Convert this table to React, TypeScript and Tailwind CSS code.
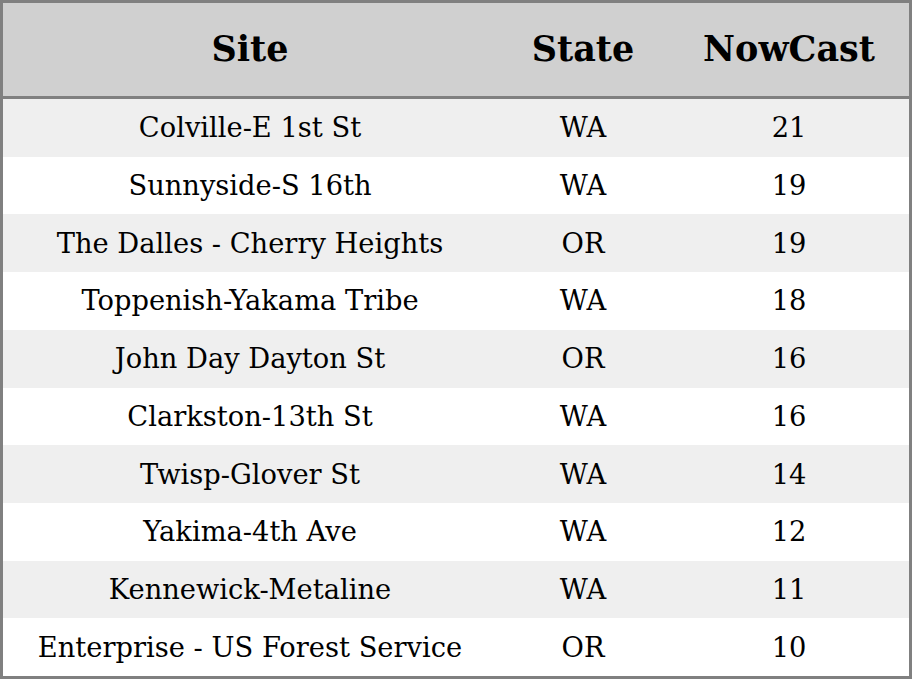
import React from 'react';

const rows = [
  { site: 'Colville-E 1st St', state: 'WA', nowcast: 21 },
  { site: 'Sunnyside-S 16th', state: 'WA', nowcast: 19 },
  { site: 'The Dalles - Cherry Heights', state: 'OR', nowcast: 19 },
  { site: 'Toppenish-Yakama Tribe', state: 'WA', nowcast: 18 },
  { site: 'John Day Dayton St', state: 'OR', nowcast: 16 },
  { site: 'Clarkston-13th St', state: 'WA', nowcast: 16 },
  { site: 'Twisp-Glover St', state: 'WA', nowcast: 14 },
  { site: 'Yakima-4th Ave', state: 'WA', nowcast: 12 },
  { site: 'Kennewick-Metaline', state: 'WA', nowcast: 11 },
  { site: 'Enterprise - US Forest Service', state: 'OR', nowcast: 10 },
];

const App = () => {
  return (
    <div className="h-[679px] w-[912px] border-[3px] border-[#808080] bg-white flex flex-col text-black font-['DejaVu_Serif',serif]">
      {/* Header */}
      <div className="h-[96px] shrink-0 grid grid-cols-[494px_172px_1fr] items-center bg-[#d0d0d0] border-b-[3px] border-[#808080] text-[35px] font-bold">
        <div className="text-center">Site</div>
        <div className="text-center">State</div>
        <div className="text-center">NowCast</div>
      </div>

      {/* Rows */}
      <div className="flex-1 flex flex-col">
        {rows.map((r, i) => (
          <div
            key={i}
            className={`flex-1 grid grid-cols-[494px_172px_1fr] items-center text-[27.3px] pt-[2px] ${i % 2 === 0 ? 'bg-[#efefef]' : 'bg-white'}`}
          >
            <div className="text-center">{r.site}</div>
            <div className="text-center">{r.state}</div>
            <div className="text-center">{r.nowcast}</div>
          </div>
        ))}
      </div>
    </div>
  );
};

export default App;
